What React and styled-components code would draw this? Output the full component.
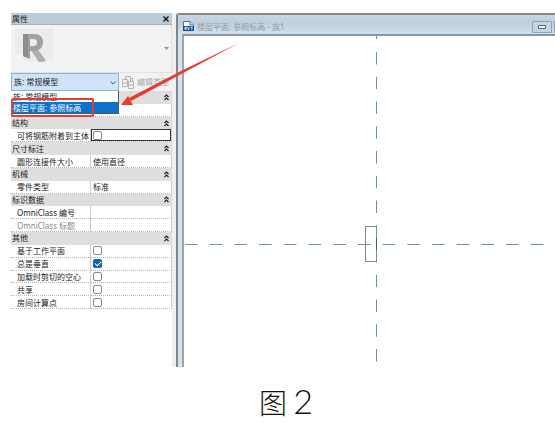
import React from "react";
import styled, { createGlobalStyle, css } from "styled-components";

// the first group stays empty, the open type list lies over it
const groups = [
  { title: "", rows: [{ name: "", value: "" }] },
  { title: "结构", rows: [{ name: "可将钢筋附着到主体", check: true, active: true }] },
  { title: "尺寸标注", rows: [{ name: "圆形连接件大小", value: "使用直径" }] },
  { title: "机械", rows: [{ name: "零件类型", value: "标准" }] },
  {
    title: "标识数据",
    rows: [
      { name: "OmniClass 编号", value: "" },
      { name: "OmniClass 标题", value: "", muted: true },
    ],
  },
  {
    title: "其他",
    rows: [
      { name: "基于工作平面", check: true },
      { name: "总是垂直", check: true, on: true },
      { name: "加载时剪切的空心", check: true },
      { name: "共享", check: true },
      { name: "房间计算点", check: true },
    ],
  },
];

const DoubleChevron = () => (
  <svg width="5" height="7" viewBox="0 0 5 7" fill="none" stroke="#222" strokeWidth="1.2">
    <path d="M0.5 3 L2.5 1 L4.5 3 M0.5 6 L2.5 4 L4.5 6" />
  </svg>
);

const RevitLogo = () => (
  <svg width="39" height="41" viewBox="0 0 39 41">
    <path d="M0 0H39V41H0Z" fill="#ececec" />
    <path d="M0 26H9V33H39V41H0Z" fill="#f3f3f3" />
    <g transform="translate(-1 2)">
      <path
        fillRule="evenodd"
        fill="#a0a0a0"
        d="M9 4H20C26 4 29 7 29 12C29 16 27 19 24 20L32 31L25 32L18 21H16V29L9 26ZM16 9V16H19C22 16 23 15 23 12C23 10 22 9 19 9Z"
      />
      <path d="M9 4H14V28L9 26Z" fill="#8e8e8e" />
      <path d="M18 21L24 20L32 31L25 32Z" fill="#aeaeae" />
    </g>
  </svg>
);

const TypeIcon = () => (
  <svg width="12" height="13" viewBox="0 0 12 13" fill="none" stroke="#b4b4b4">
    <path d="M3.5 3V0.5H8.5V5.5M8.5 2.5H10.5V5.5" />
    <path d="M0.5 3.5H5.5V10.5H0.5ZM0.5 7H5.5" />
    <path d="M6.5 5.5H11.5V12.5H6.5ZM6.5 9H11.5" />
  </svg>
);

const RvtIcon = () => (
  <svg width="11" height="11" viewBox="0 0 11 11">
    <path d="M0.5 0.5H7L10.5 4V7H0.5Z" fill="#fff" stroke="#3f76ab" />
    <path d="M7 0.5V4H10.5" fill="#cfe0ef" stroke="#3f76ab" />
    <path d="M0 5H11V10H0Z" fill="#174f88" />
    <path d="M2 9V6H3.5V7.5H2L3.5 9M4.5 6L5.5 9L6.5 6M7.5 6H10M8.8 6V9" fill="none" stroke="#fff" strokeWidth="0.7" />
  </svg>
);

const PlanDrawing = () => (
  <Drawing viewBox="0 0 371 331" preserveAspectRatio="xMinYMin slice">
    <g fill="none" stroke="#5fa36a">
      <path d="M192.5 0V3" />
      <path d="M192.5 16V327" strokeDasharray="12.5 12.25" />
      <path d="M1 208.5H371" strokeDasharray="12.6 12.1" />
    </g>
    <path d="M192.5 190.5H181.5V225.5H192.5" fill="none" stroke="#858585" />
    <path d="M192.5 190V225" stroke="#5fa36a" />
    <path d="M192.5 202V214" stroke="#555" />
  </Drawing>
);

const App = () => {
  return (
    <Figure>
      <GlobalStyle />
      <Workspace>
        <Panel>
          <PanelTitle>
            <span>属性</span>
            <CloseButton aria-label="关闭">
              <svg width="6" height="6" viewBox="0 0 6 6" stroke="#111" strokeWidth="1.3">
                <path d="M0.5 0.5L5.5 5.5M5.5 0.5L0.5 5.5" />
              </svg>
            </CloseButton>
          </PanelTitle>
          <Preview>
            <RevitLogo />
            <svg width="5" height="3" viewBox="0 0 5 3">
              <path d="M0 0H5L2.5 3Z" fill="#999" />
            </svg>
          </Preview>
          <TypeBar>
            <SelectWrap>
              <TypeSelect aria-label="族" defaultValue="family">
                <option value="family">族: 常规模型</option>
                <option value="plan">楼层平面: 参照标高</option>
              </TypeSelect>
              <SelectArrow width="6" height="4" viewBox="0 0 6 4" fill="none" stroke="#555">
                <path d="M0.5 0.5L3 3L5.5 0.5" />
              </SelectArrow>
              <Options role="listbox" aria-label="族">
                <Option role="option" aria-selected="false">族: 常规模型</Option>
                <Option role="option" aria-selected="true" $selected>
                  楼层平面: 参照标高
                </Option>
                <Highlight />
              </Options>
            </SelectWrap>
            <EditButton>
              <TypeIcon />
              编辑类型
            </EditButton>
          </TypeBar>
          <PropertyTable>
            <colgroup>
              <NameCol />
              <col />
            </colgroup>
            {groups.map((group, i) => (
              <tbody key={i}>
                <tr>
                  <GroupHead colSpan="2" scope="rowgroup">
                    <GroupTitle>
                      <span>{group.title}</span>
                      <DoubleChevron />
                    </GroupTitle>
                  </GroupHead>
                </tr>
                {group.rows.map((row) => (
                  <tr key={row.name}>
                    <NameCell $muted={row.muted}>
                      {row.check ? (
                        <label htmlFor={row.name}>{row.name}</label>
                      ) : (
                        row.name || "\u00a0"
                      )}
                    </NameCell>
                    <ValueCell $active={row.active}>
                      {row.check ? (
                        <Check type="checkbox" id={row.name} defaultChecked={row.on} />
                      ) : (
                        row.value
                      )}
                    </ValueCell>
                  </tr>
                ))}
              </tbody>
            ))}
          </PropertyTable>
        </Panel>
        <ViewWindow>
          <ViewTitle>
            <RvtIcon />
            <ViewName>楼层平面: 参照标高 - 族1</ViewName>
            <WindowButton aria-label="最小化">
              <svg width="8" height="4" viewBox="0 0 8 4" fill="#f4f4f4" stroke="#666">
                <path d="M0.5 0.5H7.5V3.5H0.5Z" />
              </svg>
            </WindowButton>
            <WindowEdge />
          </ViewTitle>
          <Canvas>
            <PlanDrawing />
          </Canvas>
        </ViewWindow>
        <Arrow width="230" height="110" viewBox="0 0 230 110" fill="#ea3a30">
          <path d="M228 30L174 59L120 88L118 85L172 57Z" />
          <path d="M110 92L117 83L122 92Z" />
        </Arrow>
      </Workspace>
      <Caption>
        图 <span>2</span>
      </Caption>
    </Figure>
  );
};

export default App;

const GlobalStyle = createGlobalStyle`
  * {
    box-sizing: border-box;
  }
  body {
    margin: 0;
    background: #fff;
    overflow-x: hidden;
    font-family: "Noto Sans", "Noto Sans CJK SC", sans-serif;
    font-size: 8px;
    line-height: 12px;
    color: #222;
  }
  button, select, input {
    font: inherit;
    margin: 0;
    padding: 0;
  }
`;

const Figure = styled.figure`
  margin: 0;
  padding-top: 13px;
`;

const Workspace = styled.div`
  position: relative;
  margin-left: 11px;
  display: grid;
  grid-template-columns: 165px 1fr;
`;

const Panel = styled.section`
  border-right: 4px solid #efefef;
`;

const PanelTitle = styled.div`
  height: 12px;
  padding: 0 3px 0 1px;
  display: flex;
  align-items: center;
  justify-content: space-between;
  background: #bccbd8;
  border-bottom: 1px solid #a9b3bc;
`;

const CloseButton = styled.button`
  width: 6px;
  height: 6px;
  border: 0;
  background: none;
  display: grid;
  place-items: center;
`;

const Preview = styled.div`
  height: 48px;
  padding: 0 2px 0 4px;
  display: flex;
  align-items: center;
  justify-content: space-between;
  background: #f3f3f3;
  border: 1px solid #e2e2e2;
  border-width: 0 1px 1px 0;
`;

const TypeBar = styled.div`
  display: flex;
  align-items: center;
  background: #f3f3f3;
`;

const SelectWrap = styled.div`
  position: relative;
  width: 108px;
`;

const TypeSelect = styled.select`
  display: block;
  width: 100%;
  height: 18px;
  padding: 0 2px;
  appearance: none;
  color: #222;
  background: #cfe4f7;
  border: 1px solid #7fb4e3;
  border-radius: 0;
`;

const SelectArrow = styled.svg`
  position: absolute;
  right: 3px;
  top: 8px;
`;

const Options = styled.div`
  position: absolute;
  top: 18px;
  left: 0;
  width: 100%;
  background: #fff;
  border: 1px solid #555;
  border-width: 0 1px 1px 0;
`;

const Option = styled.div`
  height: 11px;
  line-height: 11px;
  padding-left: 2px;
  color: ${({ $selected }) => ($selected ? "#fff" : "#222")};
  background: ${({ $selected }) => ($selected ? "#0b72cb" : "#fff")};
`;

/* red callout drawn round the selected option */
const Highlight = styled.div`
  position: absolute;
  top: 7px;
  left: 0;
  width: 83px;
  height: 19px;
  border: 2px solid #e83a34;
  border-radius: 2px;
`;

const EditButton = styled.button`
  flex: 1;
  height: 18px;
  padding-left: 3px;
  display: flex;
  align-items: center;
  gap: 3px;
  color: #a9a9a9;
  background: none;
  border: 0;
  white-space: nowrap;
`;

const PropertyTable = styled.table`
  width: 100%;
  height: 218px;
  table-layout: fixed;
  border-collapse: separate;
  border-spacing: 0;
`;

const NameCol = styled.col`
  width: 80px;
`;

const GroupHead = styled.th`
  padding: 0;
  font-weight: 400;
  text-align: left;
  line-height: 12px;
  background: #dedede;
`;

const GroupTitle = styled.div`
  height: 12px;
  padding: 0 3px 0 1px;
  display: flex;
  align-items: center;
  justify-content: space-between;
`;

const cell = css`
  padding: 0;
  line-height: 11px;
  border-bottom: 1px dotted #b5b5b5;
  border-right: 1px solid #cfcfcf;
  white-space: nowrap;
`;

const NameCell = styled.td`
  ${cell}
  padding-left: 6px;
  color: ${({ $muted }) => ($muted ? "#8c8c8c" : "#222")};
`;

const ValueCell = styled.td`
  ${cell}
  padding-left: 2px;
  ${({ $active }) => $active && "box-shadow: inset 0 0 0 1px #333;"}
`;

const Check = styled.input`
  appearance: none;
  display: block;
  width: 9px;
  height: 9px;
  background: #fff;
  border: 1px solid #8a8a8a;
  border-radius: 2px;
  &:checked {
    background: #0b66b8;
    border-color: #0b66b8;
  }
  &:checked::after {
    content: "";
    display: block;
    width: 5px;
    height: 3px;
    margin: 1px;
    border: solid #fff;
    border-width: 0 0 1px 1px;
    transform: rotate(-45deg);
  }
`;

const ViewWindow = styled.section`
  min-width: 0;
  border-top: 2px solid #85858d;
  border-left: 2px solid #7f868c;
  border-top-left-radius: 3px;
  background: #d7e3eb;
  padding-left: 4px;
`;

const ViewTitle = styled.header`
  height: 19px;
  display: flex;
  align-items: center;
  gap: 3px;
  margin-left: -4px;
  padding: 4px 0 0 5px;
  background: linear-gradient(#ccd6de, #bdcfdf 40%, #d2e0eb);
`;

const ViewName = styled.h1`
  flex: 1;
  margin: 0;
  font-size: 8px;
  font-weight: 400;
  color: #929da7;
`;

const WindowButton = styled.button`
  width: 20px;
  height: 12px;
  display: grid;
  place-items: center;
  background: #c5d5e4;
  border: 1px solid #91a2b8;
  border-radius: 1px;
`;

const WindowEdge = styled.span`
  width: 1px;
  height: 12px;
  margin-left: -1px;
  background: #91a2b8;
`;

const Canvas = styled.div`
  height: 333px;
  background: #fff;
  border-top: 2px solid #8d959c;
  border-left: 2px solid #9ba5b3;
`;

const Drawing = styled.svg`
  display: block;
  width: 100%;
  height: 100%;
`;

const Arrow = styled.svg`
  position: absolute;
  top: 0;
  left: 0;
  pointer-events: none;
`;

const Caption = styled.figcaption`
  padding: 14px 0 0 17px;
  text-align: center;
  font-family: "Noto Sans CJK SC", sans-serif;
  font-size: 28px;
  line-height: 40px;
  color: #111;
  font-weight: 300;
  span {
    font-family: Lato, "Noto Sans", sans-serif;
    font-size: 34px;
  }
`;
